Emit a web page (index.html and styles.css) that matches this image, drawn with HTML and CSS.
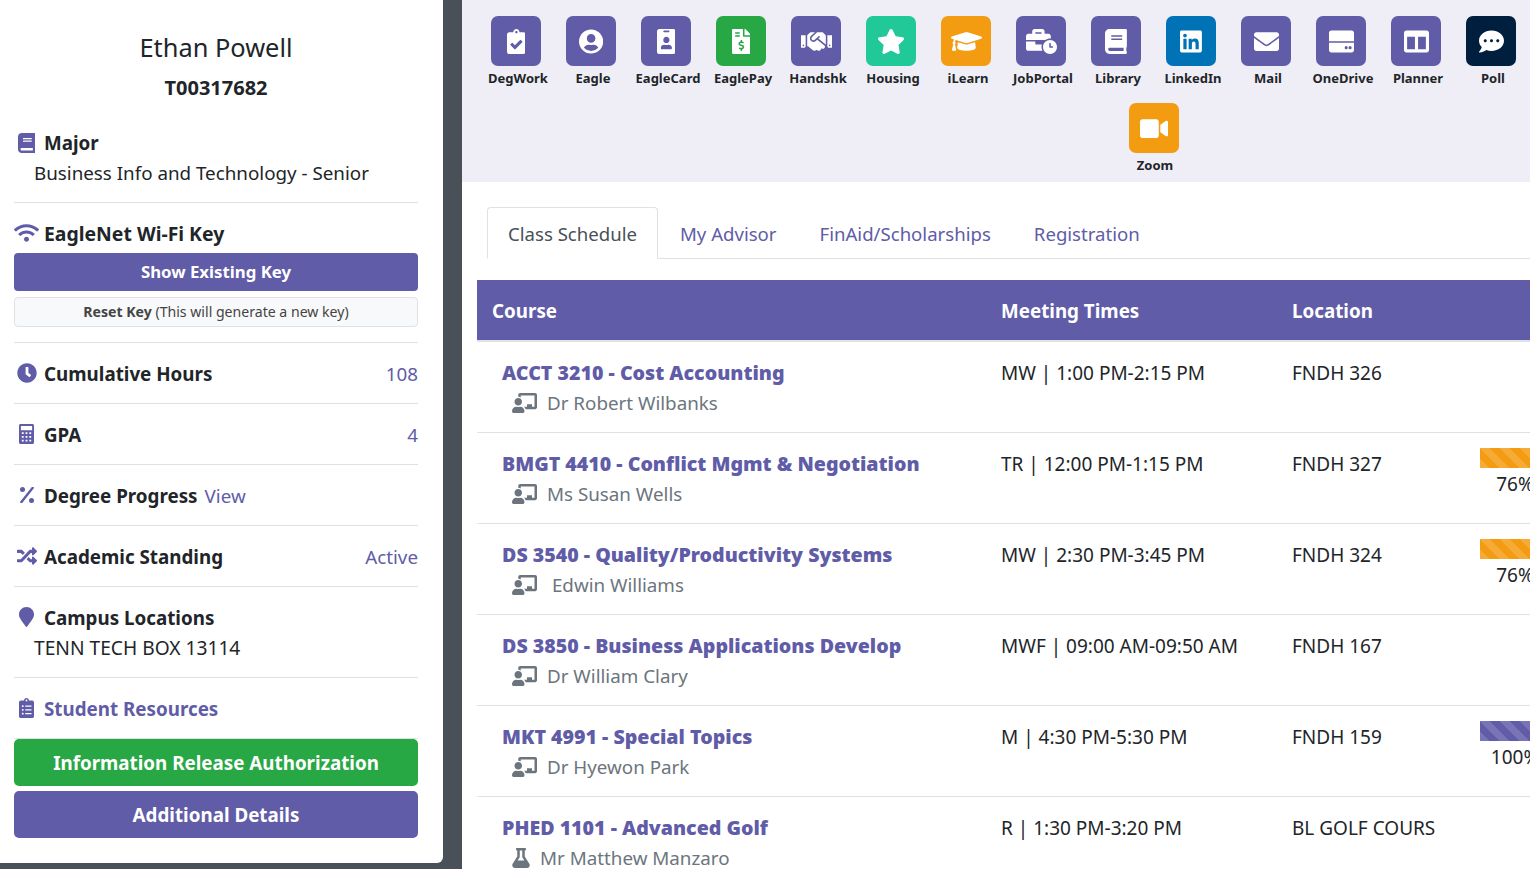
FILE: index.html
```html
<!DOCTYPE html>
<html lang="en">
<head>
<meta charset="utf-8">
<title>Student Dashboard</title>
<link rel="stylesheet" href="styles.css">
</head>
<body>
<svg class="sprite" aria-hidden="true">
  <symbol id="i-teacher" viewBox="0 0 640 512"><path d="M208 352c-2.39 0-4.78.35-7.06 1.09C187.98 357.3 174.35 360 160 360c-14.35 0-27.98-2.7-40.95-6.91-2.28-.74-4.66-1.09-7.05-1.09C49.94 352-.33 402.48 0 464.62.14 490.88 21.73 512 48 512h224c26.27 0 47.86-21.12 48-47.38.33-62.14-49.94-112.62-112-112.62zm-48-32c53.02 0 96-42.98 96-96s-42.98-96-96-96-96 42.98-96 96 42.98 96 96 96zM592 0H208c-26.47 0-48 22.25-48 49.59V96c23.42 0 45.1 6.78 64 17.8V64h352v288h-64v-64H384v64h-76.24c19.1 16.69 33.12 38.73 39.69 64H592c26.47 0 48-22.25 48-49.59V49.59C640 22.25 618.47 0 592 0z"/></symbol>
  <symbol id="i-book" viewBox="0 0 448 512"><path d="M448 360V24c0-13.3-10.7-24-24-24H96C43 0 0 43 0 96v320c0 53 43 96 96 96h328c13.3 0 24-10.7 24-24v-16c0-7.5-3.5-14.3-8.9-18.7-4.2-15.4-4.2-59.3 0-74.7 5.4-4.3 8.9-11.1 8.9-18.6zM128 134c0-3.3 2.7-6 6-6h212c3.3 0 6 2.7 6 6v20c0 3.3-2.7 6-6 6H134c-3.3 0-6-2.7-6-6v-20zm0 64c0-3.3 2.7-6 6-6h212c3.3 0 6 2.7 6 6v20c0 3.3-2.7 6-6 6H134c-3.3 0-6-2.7-6-6v-20zm253.4 250H96c-17.7 0-32-14.3-32-32 0-17.6 14.4-32 32-32h285.4c-1.9 17.1-1.9 46.9 0 64z"/></symbol>
</svg>

<div class="page">
  <aside class="sidebar">
    <div class="profile">
      <h1 class="profile-name">Ethan Powell</h1>
      <p class="profile-id">T00317682</p>
    </div>

    <section class="item item-major">
      <div class="item-line">
        <span class="item-icon"><svg class="ic ic-20" viewBox="0 0 448 512"><use href="#i-book"/></svg></span>
        <span class="item-label">Major</span>
      </div>
      <div class="item-sub">Business Info and Technology - Senior</div>
    </section>

    <section class="item">
      <div class="item-line">
        <span class="item-icon"><svg class="ic ic-20" viewBox="0 0 640 512"><path d="M634.91 154.88C457.74-8.99 182.19-8.93 5.09 154.88c-6.66 6.16-6.79 16.59-.35 22.98l34.24 33.97c6.14 6.1 16.02 6.23 22.4.38 145.92-133.68 371.3-133.71 517.25 0 6.38 5.85 16.26 5.71 22.4-.38l34.24-33.97c6.43-6.39 6.3-16.82-.36-22.98zM320 352c-35.35 0-64 28.65-64 64s28.65 64 64 64 64-28.65 64-64-28.65-64-64-64zm202.67-83.59c-115.26-101.93-290.21-101.82-405.34 0-6.9 6.1-7.12 16.69-.57 23.15l34.44 33.99c6 5.92 15.66 6.32 22.05.8 83.95-72.57 209.74-72.41 293.49 0 6.39 5.52 16.05 5.13 22.05-.8l34.44-33.99c6.56-6.46 6.33-17.06-.56-23.15z"/></svg></span>
        <span class="item-label item-label-wide">EagleNet Wi-Fi Key</span>
      </div>
      <a class="btn btn-key">Show Existing Key</a>
      <a class="btn btn-reset"><b>Reset Key</b> (This will generate a new key)</a>
    </section>

    <section class="item">
      <div class="item-line">
        <span class="item-icon"><svg class="ic ic-20" viewBox="0 0 512 512"><path d="M256 8C119 8 8 119 8 256s111 248 248 248 248-111 248-248S393 8 256 8zm57.1 350.1L224.9 294c-3.1-2.3-4.9-5.9-4.9-9.7V116c0-6.6 5.4-12 12-12h48c6.6 0 12 5.4 12 12v137.7l63.5 46.2c5.4 3.9 6.5 11.4 2.6 16.8l-28.2 38.8c-3.9 5.3-11.4 6.5-16.8 2.6z"/></svg></span>
        <span class="item-label">Cumulative Hours</span>
        <span class="item-value">108</span>
      </div>
    </section>

    <section class="item">
      <div class="item-line">
        <span class="item-icon"><svg class="ic ic-20" viewBox="0 0 384 512"><path fill-rule="evenodd" d="M40 0h304c22 0 40 18 40 40v432c0 22-18 40-40 40H40c-22 0-40-18-40-40V40C0 18 18 0 40 0zM48 48v112h288V48zM72 208v48h48v-48zM168 208v48h48v-48zM264 208v48h48v-48zM72 304v48h48v-48zM168 304v48h48v-48zM264 304v48h48v-48zM72 400v48h48v-48zM168 400v48h48v-48zM264 400v48h48v-48z"/></svg></span>
        <span class="item-label">GPA</span>
        <span class="item-value">4</span>
      </div>
    </section>

    <section class="item">
      <div class="item-line">
        <span class="item-icon"><svg class="ic ic-16" viewBox="0 0 448 512"><path d="M392.3.2l31.6.1c19.4.1 30.9 21.8 20 37.8L77.4 501.6a23.95 23.95 0 0 1-20 10.5l-33.4-.1c-19.5 0-30.9-21.9-19.9-37.9L372.4 10.5C376.9 3.9 384.4 0 392.3.2z"/><circle cx="80" cy="80" r="80"/><circle cx="368" cy="432" r="80"/></svg></span>
        <span class="item-label">Degree Progress</span>
        <a class="item-link">View</a>
      </div>
    </section>

    <section class="item">
      <div class="item-line">
        <span class="item-icon"><svg class="ic ic-20" viewBox="0 0 512 512"><path d="M504.971 359.029c9.373 9.373 9.373 24.569 0 33.941l-80 79.984c-15.01 15.01-40.971 4.49-40.971-16.971V416h-58.785a12.004 12.004 0 0 1-8.773-3.812l-70.556-75.596 53.333-57.143L352 336h32v-39.981c0-21.438 25.943-31.998 40.971-16.971l80 79.981zM12 176h84l52.781 56.551 53.333-57.143-70.556-75.596A11.999 11.999 0 0 0 122.785 96H12c-6.627 0-12 5.373-12 12v56c0 6.627 5.373 12 12 12zm372 0v39.984c0 21.46 25.961 31.98 40.971 16.971l80-79.984c9.373-9.373 9.373-24.569 0-33.941l-80-79.981C409.943 24.021 384 34.582 384 56.019V96h-58.785a12.004 12.004 0 0 0-8.773 3.812L96 336H12c-6.627 0-12 5.373-12 12v56c0 6.627 5.373 12 12 12h110.785c3.326 0 6.503-1.381 8.773-3.812L352 176h32z"/></svg></span>
        <span class="item-label">Academic Standing</span>
        <span class="item-value">Active</span>
      </div>
    </section>

    <section class="item">
      <div class="item-line">
        <span class="item-icon"><svg class="ic ic-20" viewBox="0 0 384 512"><path d="M192 0C86 0 0 86 0 192c0 77 27 99 172 308 10 15 30 15 40 0 145-209 172-231 172-308C384 86 298 0 192 0z"/></svg></span>
        <span class="item-label">Campus Locations</span>
      </div>
      <div class="item-sub item-sub-caps">TENN TECH BOX 13114</div>
    </section>

    <section class="item">
      <div class="item-line">
        <span class="item-icon"><svg class="ic ic-20" viewBox="0 0 384 512"><path d="M336 64h-80c0-35.3-28.7-64-64-64s-64 28.7-64 64H48C21.5 64 0 85.5 0 112v352c0 26.5 21.5 48 48 48h288c26.5 0 48-21.5 48-48V112c0-26.5-21.5-48-48-48zM96 424c-13.3 0-24-10.7-24-24s10.7-24 24-24 24 10.7 24 24-10.7 24-24 24zm0-96c-13.3 0-24-10.7-24-24s10.7-24 24-24 24 10.7 24 24-10.7 24-24 24zm0-96c-13.3 0-24-10.7-24-24s10.7-24 24-24 24 10.7 24 24-10.7 24-24 24zm96-192c13.3 0 24 10.7 24 24s-10.7 24-24 24-24-10.7-24-24 10.7-24 24-24zm128 368c0 4.4-3.6 8-8 8H168c-4.4 0-8-3.6-8-8v-16c0-4.4 3.6-8 8-8h144c4.4 0 8 3.6 8 8v16zm0-96c0 4.4-3.6 8-8 8H168c-4.4 0-8-3.6-8-8v-16c0-4.4 3.6-8 8-8h144c4.4 0 8 3.6 8 8v16zm0-96c0 4.4-3.6 8-8 8H168c-4.4 0-8-3.6-8-8v-16c0-4.4 3.6-8 8-8h144c4.4 0 8 3.6 8 8v16z"/></svg></span>
        <span class="item-label item-label-accent">Student Resources</span>
      </div>
    </section>

    <div class="actions">
      <a class="btn btn-action btn-green">Information Release Authorization</a>
      <a class="btn btn-action btn-purple">Additional Details</a>
    </div>
  </aside>

  <main class="main">
    <nav class="apps">
      <div class="apps-row">
        <a class="app"><span class="tile tile-purple"><svg class="ic ic-25" viewBox="0 0 384 512"><path d="M336 64h-80c0-35.3-28.7-64-64-64s-64 28.7-64 64H48C21.5 64 0 85.5 0 112v352c0 26.5 21.5 48 48 48h288c26.5 0 48-21.5 48-48V112c0-26.5-21.5-48-48-48zM192 40c13.3 0 24 10.7 24 24s-10.7 24-24 24-24-10.7-24-24 10.7-24 24-24zm121.2 231.8l-143 141.8c-4.7 4.7-12.3 4.6-17-.1l-82.6-83.3c-4.7-4.7-4.6-12.3.1-17L99.1 285c4.7-4.7 12.3-4.6 17 .1l46 46.4 106-105.2c4.7-4.7 12.3-4.6 17 .1l28.2 28.4c4.7 4.8 4.6 12.3-.1 17z"/></svg></span><span class="app-name">DegWork</span></a>
        <a class="app"><span class="tile tile-purple"><svg class="ic ic-25" viewBox="0 0 496 512"><path d="M248 8C111 8 0 119 0 256s111 248 248 248 248-111 248-248S385 8 248 8zm0 96c48.6 0 88 39.4 88 88s-39.4 88-88 88-88-39.4-88-88 39.4-88 88-88zm0 344c-58.7 0-111.3-26.6-146.5-68.2 18.8-35.4 55.6-59.8 98.5-59.8 2.4 0 4.8.4 7.1 1.1 13 4.2 26.6 6.9 40.9 6.9 14.3 0 28-2.7 40.9-6.9 2.3-.7 4.7-1.1 7.1-1.1 42.9 0 79.7 24.4 98.5 59.8C359.3 421.4 306.7 448 248 448z"/></svg></span><span class="app-name">Eagle</span></a>
        <a class="app"><span class="tile tile-purple"><svg class="ic ic-25" viewBox="0 0 384 512"><path d="M336 0H48C21.5 0 0 21.5 0 48v416c0 26.5 21.5 48 48 48h288c26.5 0 48-21.5 48-48V48c0-26.5-21.5-48-48-48zM144 32h96c8.8 0 16 7.2 16 16s-7.2 16-16 16h-96c-8.8 0-16-7.2-16-16s7.2-16 16-16zm48 128c35.3 0 64 28.7 64 64s-28.7 64-64 64-64-28.7-64-64 28.7-64 64-64zm112 236.8c0 10.6-10 19.2-22.4 19.2H102.4C90 416 80 407.4 80 396.8v-19.2c0-31.8 30.1-57.6 67.2-57.6h5c12.3 5.1 25.7 8 39.8 8s27.6-2.9 39.8-8h5c37.1 0 67.2 25.8 67.2 57.6v19.2z"/></svg></span><span class="app-name">EagleCard</span></a>
        <a class="app"><span class="tile tile-green"><svg class="ic ic-25" viewBox="0 0 384 512"><path d="M377 105L279.1 7c-4.5-4.5-10.6-7-17-7H256v128h128v-6.1c0-6.3-2.5-12.4-7-16.9zm-153 31V0H24C10.7 0 0 10.7 0 24v464c0 13.3 10.7 24 24 24h336c13.3 0 24-10.7 24-24V160H248c-13.2 0-24-10.8-24-24zM64 72c0-4.42 3.58-8 8-8h80c4.42 0 8 3.58 8 8v16c0 4.42-3.58 8-8 8H72c-4.42 0-8-3.58-8-8V72zm0 80v-16c0-4.42 3.58-8 8-8h80c4.42 0 8 3.58 8 8v16c0 4.42-3.58 8-8 8H72c-4.42 0-8-3.58-8-8zm144 263.88V440c0 4.42-3.58 8-8 8h-16c-4.42 0-8-3.58-8-8v-24.29c-11.29-.58-22.27-4.52-31.37-11.35-3.9-2.93-4.1-8.77-.57-12.14l11.75-11.21c2.77-2.64 6.89-2.76 10.13-.73 3.87 2.42 8.26 3.72 12.82 3.72h28.11c6.5 0 11.8-5.92 11.8-13.19 0-5.95-3.61-11.19-8.77-12.73l-45-13.5c-18.59-5.58-31.58-23.42-31.58-43.39 0-24.52 19.05-44.44 42.67-45.07V232c0-4.42 3.58-8 8-8h16c4.42 0 8 3.58 8 8v24.29c11.29.58 22.27 4.51 31.37 11.35 3.9 2.93 4.1 8.77.57 12.14l-11.75 11.21c-2.77 2.64-6.89 2.76-10.13.73-3.87-2.43-8.26-3.72-12.82-3.72h-28.11c-6.5 0-11.8 5.92-11.8 13.19 0 5.95 3.61 11.19 8.77 12.73l45 13.5c18.59 5.58 31.58 23.42 31.58 43.39 0 24.53-19.05 44.44-42.67 45.07z"/></svg></span><span class="app-name">EaglePay</span></a>
        <a class="app"><span class="tile tile-purple"><svg class="ic ic-25" viewBox="0 0 640 512"><path d="M434.7 64h-85.9c-8 0-15.7 3-21.6 8.4l-98.3 90c-.1.1-.2.3-.3.4-16.6 15.6-16.3 40.5-2.1 56 12.7 13.9 39.4 17.6 56.1 2.7.1-.1.3-.1.4-.2l79.9-73.2c6.5-5.9 16.7-5.5 22.6 1 6 6.5 5.5 16.6-1 22.6l-26.1 23.9L504 313.8c2.9 2.4 5.5 5 7.9 7.7V128l-54.6-54.6c-5.9-6-14.1-9.4-22.6-9.4zM544 128.2v223.9c0 17.7 14.3 32 32 32h64V128.2h-96zm48 223.9c-8.8 0-16-7.2-16-16s7.2-16 16-16 16 7.2 16 16-7.2 16-16 16zM0 384h64c17.7 0 32-14.3 32-32V128.2H0V384zm48-63.9c8.8 0 16 7.2 16 16s-7.2 16-16 16-16-7.2-16-16c0-8.9 7.2-16 16-16zm435.9 18.6L334.6 217.5l-30 27.5c-29.7 27.1-75.2 24.5-101.7-4.4-26.9-29.4-24.8-74.9 4.4-101.7L289.1 64h-83.8c-8.5 0-16.6 3.4-22.6 9.4L128 128v223.9h18.3l90.5 81.9c27.4 22.3 67.7 18.1 90-9.3l.2-.2 17.9 15.5c15.9 13 39.4 10.5 52.3-5.4l31.4-38.6 5.4 4.4c13.7 11.1 33.9 9.1 45-4.7l9.5-11.7c11.2-13.8 9.1-33.9-4.6-45.1z"/></svg></span><span class="app-name">Handshk</span></a>
        <a class="app"><span class="tile tile-teal"><svg class="ic ic-25" viewBox="0 0 576 512"><path d="M259.3 17.8L194 150.2 47.9 171.5c-26.2 3.8-36.7 36.1-17.7 54.6l105.7 103-25 145.5c-4.5 26.3 23.2 46 46.4 33.7L288 439.6l130.7 68.7c23.2 12.2 50.9-7.4 46.4-33.7l-25-145.5 105.7-103c19-18.5 8.5-50.8-17.7-54.6L382 150.2 316.7 17.8c-11.7-23.6-45.6-23.9-57.4 0z"/></svg></span><span class="app-name">Housing</span></a>
        <a class="app"><span class="tile tile-orange"><svg class="ic ic-25" viewBox="0 0 640 512"><path d="M622.34 153.2L343.4 67.5c-15.2-4.67-31.6-4.67-46.79 0L17.66 153.2c-23.54 7.23-23.54 38.36 0 45.59l48.63 14.94c-10.67 13.19-17.23 29.28-17.88 46.9C38.78 266.15 32 276.11 32 288c0 10.78 5.68 19.85 13.86 25.65L20.33 428.53C18.11 438.52 25.71 448 35.94 448h56.11c10.24 0 17.84-9.48 15.62-19.47L82.14 313.65C90.32 307.85 96 298.78 96 288c0-11.57-6.47-21.25-15.66-26.87.76-15.02 8.44-28.3 20.69-36.72L296.6 284.5c9.06 2.78 26.44 6.25 46.79 0l278.95-85.7c23.55-7.24 23.55-38.36 0-45.6zM352.79 315.09c-28.53 8.76-52.84 3.92-65.59 0l-145.02-44.55L128 384c0 35.35 85.96 64 192 64s192-28.65 192-64l-14.18-113.47-145.03 44.56z"/></svg></span><span class="app-name">iLearn</span></a>
        <a class="app"><span class="tile tile-purple"><svg class="ic ic-25" viewBox="0 0 640 512"><path d="M496 224c-79.59 0-144 64.41-144 144s64.41 144 144 144 144-64.41 144-144-64.41-144-144-144zm64 150.29c0 5.34-4.37 9.71-9.71 9.71h-60.57c-5.34 0-9.71-4.37-9.71-9.71v-76.57c0-5.34 4.37-9.71 9.71-9.71h12.57c5.34 0 9.71 4.37 9.71 9.71V352h38.29c5.34 0 9.71 4.37 9.71 9.71v12.58zM496 192c5.4 0 10.72.33 16 .81V144c0-25.6-22.4-48-48-48h-80V48c0-25.6-22.4-48-48-48H176c-25.6 0-48 22.4-48 48v48H48c-25.6 0-48 22.4-48 48v80h395.12c28.6-20.09 63.35-32 100.88-32zM320 96H192V64h128v32zm6.82 224H208c-8.84 0-16-7.16-16-16v-48H0v144c0 25.6 22.4 48 48 48h291.43C327.1 423.96 320 396.82 320 368c0-16.66 2.48-32.72 6.82-48z"/></svg></span><span class="app-name">JobPortal</span></a>
        <a class="app"><span class="tile tile-purple"><svg class="ic ic-25" viewBox="0 0 448 512"><use href="#i-book"/></svg></span><span class="app-name">Library</span></a>
        <a class="app"><span class="tile tile-blue"><svg class="ic ic-25" viewBox="0 0 448 512"><path d="M416 32H31.9C14.3 32 0 46.5 0 64.3v383.4C0 465.5 14.3 480 31.9 480H416c17.6 0 32-14.5 32-32.3V64.3c0-17.8-14.4-32.3-32-32.3zM135.4 416H69V202.2h66.5V416zm-33.2-243c-21.3 0-38.5-17.3-38.5-38.5S80.9 96 102.2 96c21.2 0 38.5 17.3 38.5 38.5 0 21.3-17.2 38.5-38.5 38.5zm282.1 243h-66.4V312c0-24.8-.5-56.7-34.5-56.7-34.6 0-39.9 27-39.9 54.9V416h-66.4V202.2h63.7v29.2h.9c8.9-16.8 30.6-34.5 62.9-34.5 67.2 0 79.7 44.3 79.7 101.9V416z"/></svg></span><span class="app-name">LinkedIn</span></a>
        <a class="app"><span class="tile tile-purple"><svg class="ic ic-25" viewBox="0 0 512 512"><path d="M502.3 190.8c3.9-3.1 9.7-.2 9.7 4.7V400c0 26.5-21.5 48-48 48H48c-26.5 0-48-21.5-48-48V195.6c0-5 5.7-7.8 9.7-4.7 22.4 17.4 52.1 39.5 154.1 113.6 21.1 15.4 56.7 47.8 92.2 47.6 35.7.3 72-32.8 92.3-47.6 102-74.1 131.6-96.3 154-113.7zM256 320c23.2.4 56.6-29.2 73.4-41.4 132.7-96.3 142.8-104.7 173.4-128.7 5.8-4.5 9.2-11.5 9.2-18.9v-19c0-26.5-21.5-48-48-48H48C21.5 64 0 85.5 0 112v19c0 7.4 3.4 14.3 9.2 18.9 30.6 23.9 40.7 32.4 173.4 128.7 16.8 12.2 50.2 41.8 73.4 41.4z"/></svg></span><span class="app-name">Mail</span></a>
        <a class="app"><span class="tile tile-purple"><svg class="ic ic-25" viewBox="0 0 512 512"><path fill-rule="evenodd" d="M48 32h416c26.5 0 48 21.5 48 48v172H0V80c0-26.5 21.5-48 48-48zM0 284h512v148c0 26.5-21.5 48-48 48H48c-26.5 0-48-21.5-48-48zM384 382a32 32 0 1 0-64 0 32 32 0 1 0 64 0zM464 382a32 32 0 1 0-64 0 32 32 0 1 0 64 0z"/></svg></span><span class="app-name">OneDrive</span></a>
        <a class="app"><span class="tile tile-purple"><svg class="ic ic-25" viewBox="0 0 512 512"><path d="M464 32H48C21.49 32 0 53.49 0 80v352c0 26.51 21.49 48 48 48h416c26.51 0 48-21.49 48-48V80c0-26.51-21.49-48-48-48zM224 416H64V160h160v256zm224 0H288V160h160v256z"/></svg></span><span class="app-name">Planner</span></a>
        <a class="app"><span class="tile tile-navy"><svg class="ic ic-25" viewBox="0 0 512 512"><path d="M256 32C114.6 32 0 125.1 0 240c0 49.6 21.4 95 57 130.7C44.5 421.1 2.7 466 2.2 466.5c-2.2 2.3-2.8 5.7-1.5 8.7S4.8 480 8 480c66.3 0 116-31.8 140.6-51.4 32.7 12.3 69 19.4 107.4 19.4 141.4 0 256-93.1 256-208S397.4 32 256 32zM128 272c-17.7 0-32-14.3-32-32s14.3-32 32-32 32 14.3 32 32-14.3 32-32 32zm128 0c-17.7 0-32-14.3-32-32s14.3-32 32-32 32 14.3 32 32-14.3 32-32 32zm128 0c-17.7 0-32-14.3-32-32s14.3-32 32-32 32 14.3 32 32-14.3 32-32 32z"/></svg></span><span class="app-name">Poll</span></a>
      </div>
      <div class="apps-row apps-row-center">
        <a class="app"><span class="tile tile-orange"><svg class="ic ic-25" viewBox="0 0 576 512"><path d="M336.2 64H47.8C21.4 64 0 85.4 0 111.8v288.4C0 426.6 21.4 448 47.8 448h288.4c26.4 0 47.8-21.4 47.8-47.8V111.8c0-26.4-21.4-47.8-47.8-47.8zm189.4 37.7L416 177.3v157.4l109.6 75.5c21.2 14.6 50.4-.3 50.4-25.8V127.5c0-25.4-29.1-40.4-50.4-25.8z"/></svg></span><span class="app-name">Zoom</span></a>
      </div>
    </nav>

    <div class="content">
      <ul class="tabs">
        <li class="tab tab-active">Class Schedule</li>
        <li class="tab">My Advisor</li>
        <li class="tab">FinAid/Scholarships</li>
        <li class="tab">Registration</li>
      </ul>

      <table class="schedule">
        <thead>
          <tr><th class="col-course">Course</th><th class="col-times">Meeting Times</th><th class="col-loc">Location</th><th class="col-prog"></th></tr>
        </thead>
        <tbody>
          <tr>
            <td><a class="course">ACCT 3210 - Cost Accounting</a><div class="teacher"><svg class="ic-t"><use href="#i-teacher"/></svg>Dr Robert Wilbanks</div></td>
            <td>MW | 1:00 PM-2:15 PM</td><td>FNDH 326</td><td></td>
          </tr>
          <tr>
            <td><a class="course">BMGT 4410 - Conflict Mgmt &amp; Negotiation</a><div class="teacher"><svg class="ic-t"><use href="#i-teacher"/></svg>Ms Susan Wells</div></td>
            <td>TR | 12:00 PM-1:15 PM</td><td>FNDH 327</td>
            <td class="prog"><div class="bar bar-orange"></div>76%</td>
          </tr>
          <tr>
            <td><a class="course">DS 3540 - Quality/Productivity Systems</a><div class="teacher"><svg class="ic-t"><use href="#i-teacher"/></svg>&nbsp;Edwin Williams</div></td>
            <td>MW | 2:30 PM-3:45 PM</td><td>FNDH 324</td>
            <td class="prog"><div class="bar bar-orange"></div>76%</td>
          </tr>
          <tr>
            <td><a class="course">DS 3850 - Business Applications Develop</a><div class="teacher"><svg class="ic-t"><use href="#i-teacher"/></svg>Dr William Clary</div></td>
            <td>MWF | 09:00 AM-09:50 AM</td><td>FNDH 167</td><td></td>
          </tr>
          <tr>
            <td><a class="course">MKT 4991 - Special Topics</a><div class="teacher"><svg class="ic-t"><use href="#i-teacher"/></svg>Dr Hyewon Park</div></td>
            <td>M | 4:30 PM-5:30 PM</td><td>FNDH 159</td>
            <td class="prog"><div class="bar bar-purple"></div>100%</td>
          </tr>
          <tr>
            <td><a class="course">PHED 1101 - Advanced Golf</a><div class="teacher"><svg class="ic-f" viewBox="0 0 448 512"><path d="M437.2 403.5L320 215V64h8c13.3 0 24-10.7 24-24V24c0-13.3-10.7-24-24-24H120c-13.3 0-24 10.7-24 24v16c0 13.3 10.7 24 24 24h8v151L10.8 403.5C-18.5 450.6 15.3 512 70.9 512h306.2c55.7 0 89.4-61.5 60.1-108.5zM137.9 320l48.2-77.6c3.7-5.2 5.8-11.6 5.8-18.4V64h64v160c0 6.9 2.2 13.2 5.8 18.4l48.2 77.6h-172z"/></svg>Mr Matthew Manzaro</div></td>
            <td>R | 1:30 PM-3:20 PM</td><td>BL GOLF COURS</td><td></td>
          </tr>
        </tbody>
      </table>
    </div>
  </main>
</div>
</body>
</html>
```

FILE: styles.css
```css
* { box-sizing: border-box; }
html, body { margin: 0; height: 869px; overflow: hidden; }
body {
  background: #495057;
  font-family: "Noto Sans", "Open Sans", sans-serif;
  font-size: 18.8px;
  line-height: 30px;
  color: #212529;
}
.sprite { display: none; }
.page { display: flex; align-items: flex-start; gap: 19px; width: 1848px; }

/* Sidebar */
.sidebar {
  flex: none;
  width: 443px;
  height: 863px;
  padding: 0 25px 0 14px;
  background: #fff;
  border-bottom-right-radius: 6px;
}
.profile { height: 113px; padding-top: 29px; text-align: center; }
.profile-name { margin: 0; font-size: 25.4px; line-height: 36px; font-weight: 400; }
.profile-id { margin: 8px 0 0; font-size: 20px; font-weight: 700; line-height: 30px; }
.item { padding: 15px 0; border-bottom: 1px solid #dee2e6; }
.item-major { padding-bottom: 14px; }
.item-line { display: flex; align-items: center; height: 30px; }
.item-icon { flex: none; width: 25px; margin-right: 5px; display: flex; justify-content: center; color: #605ca8; }
.ic { display: block; fill: currentColor; }
.ic-16 { height: 16px; width: auto; }
.ic-20 { height: 20px; width: auto; max-width: 25px; }
.ic-25 { height: 25px; width: auto; max-width: 31px; }
.item-label, .item-value, .item-link { margin-top: 2px; }
.item-major .item-label { margin-top: 0; }
.item-label { font-weight: 700; }
.item-label-wide { font-size: 19.4px; }
.item-label-accent { color: #605ca8; }
.item-value { margin-left: auto; color: #605ca8; }
.item-link { margin-left: 7px; color: #605ca8; }
.item-sub { padding-left: 20px; }
.item-sub-caps { font-size: 19.2px; line-height: 32px; margin-bottom: -2px; }
.btn { display: block; text-align: center; border-radius: 4px; }
.btn-key {
  margin-top: 5px; height: 38px; line-height: 38px;
  background: #605ca8; color: #fff; font-size: 16.8px; font-weight: 700;
}
.btn-reset {
  margin-top: 6px; height: 30px; line-height: 28px;
  background: #f8f9fa; border: 1px solid #dee2e6; color: #444;
  font-size: 14.1px;
}
.actions { display: flex; flex-direction: column; gap: 5px; }
.btn-action { height: 47px; line-height: 49px; border-radius: 5px; color: #fff; font-weight: 700; }
.btn-green { background: #28a745; }
.btn-purple { background: #605ca8; }

/* Main */
.main { flex: none; width: 1386px; height: 869px; background: #fff; }
.apps { height: 182px; padding-top: 16px; background: #efeef6; }
.apps-row { display: flex; padding-left: 18.5px; }
.apps-row-center { justify-content: center; padding-left: 0; }
.app { flex: none; width: 75px; height: 87px; display: flex; flex-direction: column; align-items: center; }
.tile {
  width: 50px; height: 50px; margin-right: 4px;
  display: flex; align-items: center; justify-content: center;
  border-radius: 7px; color: #fff;
}
.apps-row-center .tile { margin-right: 2px; }
.tile-purple { background: #605ca8; }
.tile-green { background: #28a745; }
.tile-teal { background: #20c997; }
.tile-orange { background: #f39c12; }
.tile-blue { background: #0073b7; }
.tile-navy { background: #001f3f; }
.app-name { margin-top: 2px; font-size: 13px; line-height: 20px; font-weight: 700; white-space: nowrap; }

.content { padding: 25px 0 0 15px; }
.tabs {
  display: flex; margin: 0 0 21px 10px; padding: 0; list-style: none;
  border-bottom: 1px solid #dee2e6;
}
.tab {
  padding: 11px 20px; height: 52px; line-height: 30px; font-size: 18.6px;
  margin-bottom: -1px; margin-right: 1px;
  border: 1px solid transparent; border-radius: 4px 4px 0 0;
  color: #605ca8;
}
.tab-active { color: #495057; border-color: #dee2e6 #dee2e6 #fff; background: #fff; }

.schedule { width: 1088px; border-collapse: collapse; table-layout: fixed; }
.schedule th {
  height: 61px; padding: 2px 15px 0; text-align: left;
  background: #605ca8; color: #fff; font-weight: 700;
  border-bottom: 2px solid #dee2e6;
}
.col-course { width: 509px; }
.col-times { width: 291px; }
.col-loc { width: 188px; }
.col-prog { width: 100px; }
.schedule td { height: 91px; padding: 16px 15px 0; font-size: 19px; vertical-align: top; border-top: 1px solid #dee2e6; }
.schedule tbody tr:first-child td { border-top: 0; height: 91px; }
.schedule td:first-child { padding-left: 25px; padding-right: 0; font-size: 18.8px; }
.course { display: block; color: #605ca8; font-size: 19.6px; font-weight: 900; white-space: nowrap; }
.teacher { display: flex; align-items: center; padding-left: 10px; color: #6c757d; white-space: pre; }
.ic-t { flex: none; width: 25px; height: 20px; margin-right: 10px; fill: currentColor; }
.ic-f { flex: none; width: 18px; height: 20px; margin-right: 10px; fill: currentColor; }
.schedule td.prog { padding-top: 15px; text-align: center; }
.bar {
  height: 20px; margin-bottom: 1px;
  background-image: linear-gradient(45deg, rgba(255,255,255,.15) 25%, transparent 25%, transparent 50%, rgba(255,255,255,.15) 50%, rgba(255,255,255,.15) 75%, transparent 75%, transparent);
  background-size: 20px 20px;
}
.bar-orange { background-color: #f39c12; }
.bar-purple { background-color: #605ca8; }
```
